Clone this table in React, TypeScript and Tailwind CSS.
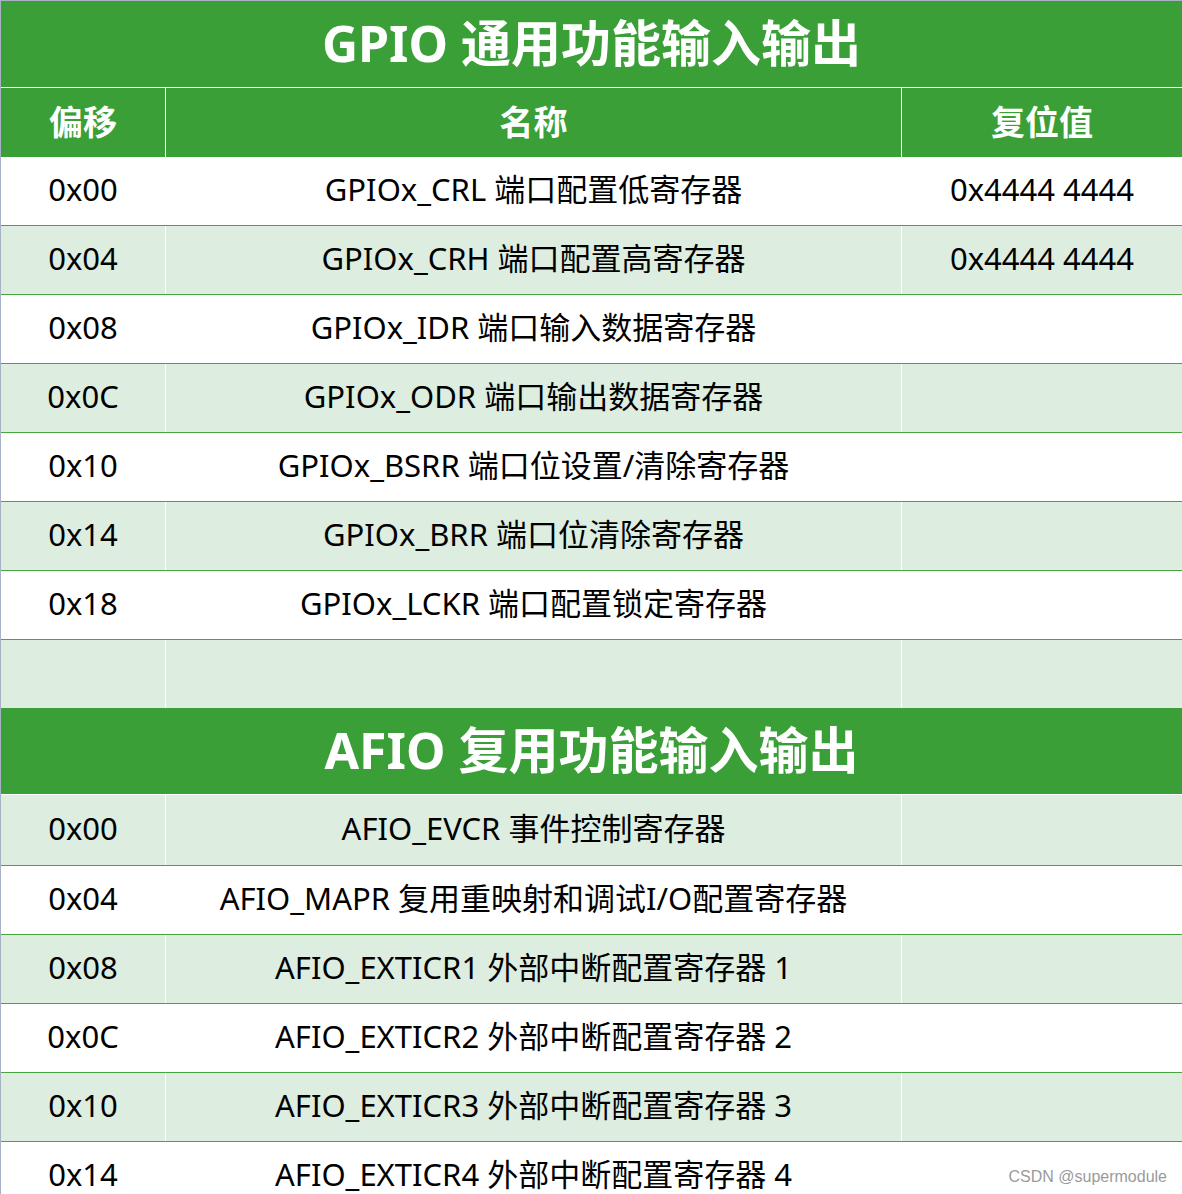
import React from "react";

type Row = { off: string; name: string; reset?: string };

const gpio: Row[] = [
  { off: "0x00", name: "GPIOx_CRL 端口配置低寄存器", reset: "0x4444 4444" },
  { off: "0x04", name: "GPIOx_CRH 端口配置高寄存器", reset: "0x4444 4444" },
  { off: "0x08", name: "GPIOx_IDR 端口输入数据寄存器" },
  { off: "0x0C", name: "GPIOx_ODR 端口输出数据寄存器" },
  { off: "0x10", name: "GPIOx_BSRR 端口位设置/清除寄存器" },
  { off: "0x14", name: "GPIOx_BRR 端口位清除寄存器" },
  { off: "0x18", name: "GPIOx_LCKR 端口配置锁定寄存器" },
];

const afio: Row[] = [
  { off: "0x00", name: "AFIO_EVCR 事件控制寄存器" },
  { off: "0x04", name: "AFIO_MAPR 复用重映射和调试I/O配置寄存器" },
  { off: "0x08", name: "AFIO_EXTICR1 外部中断配置寄存器 1" },
  { off: "0x0C", name: "AFIO_EXTICR2 外部中断配置寄存器 2" },
  { off: "0x10", name: "AFIO_EXTICR3 外部中断配置寄存器 3" },
  { off: "0x14", name: "AFIO_EXTICR4 外部中断配置寄存器 4" },
];

function DataRow({
  r,
  light,
  last,
  noBorder,
  tall,
}: {
  r: Row;
  light: boolean;
  last?: boolean;
  noBorder?: boolean;
  tall?: boolean;
}) {
  return (
    <div
      className={
        "relative flex " +
        (noBorder ? "h-[68px] " : tall ? "h-[71px] border-b border-[#45a640] " : "h-[69px] border-b border-[#45a640] ") +
        (light ? "bg-[#ddede0]" : "bg-white")
      }
    >
      <div className="flex w-[165px] shrink-0 items-center justify-center border-r border-white pb-[4px]">
        {r.off}
      </div>
      <div className="flex w-[736px] shrink-0 items-center justify-center border-r border-white pb-[4px] whitespace-nowrap">
        {r.name}
      </div>
      <div className="flex flex-1 items-center justify-center pb-[4px] whitespace-nowrap">{r.reset ?? ""}</div>
      {last && (
        <div className="absolute right-[15px] top-[25px] text-[16px] leading-[20px] text-[#9a9a9a] [font-family:'Liberation_Sans',Arial,sans-serif]">
          CSDN @supermodule
        </div>
      )}
    </div>
  );
}

function Title({ text }: { text: string }) {
  return (
    <div className="flex h-[86px] items-center justify-center bg-[#3a9f37] pb-[2px] text-[50px] font-bold leading-none text-white">
      {text}
    </div>
  );
}

export default function App() {
  return (
    <div className="min-h-screen w-[1182px] bg-white">
      <div className="border-l border-t border-[#a8b2c6] text-[31px] leading-none text-black [font-family:'Noto_Sans','Noto_Sans_CJK_SC',sans-serif]">
        <Title text="GPIO 通用功能输入输出" />
        <div className="flex h-[70px] border-t border-white bg-[#3a9f37] text-[34px] font-bold text-white">
          <div className="flex w-[165px] shrink-0 items-center justify-center border-r border-white pb-[2px]">偏移</div>
          <div className="flex w-[736px] shrink-0 items-center justify-center border-r border-white pb-[2px]">名称</div>
          <div className="flex flex-1 items-center justify-center pb-[2px]">复位值</div>
        </div>
        {gpio.map((r, i) => (
          <DataRow key={"g" + i} r={r} light={i % 2 === 1} />
        ))}
        <DataRow r={{ off: "", name: "" }} light noBorder />
        <div className="border-b border-white">
          <Title text="AFIO 复用功能输入输出" />
        </div>
        {afio.map((r, i) => (
          <DataRow key={"a" + i} r={r} light={i % 2 === 0} last={i === afio.length - 1} tall={i === 0} />
        ))}
      </div>
    </div>
  );
}
